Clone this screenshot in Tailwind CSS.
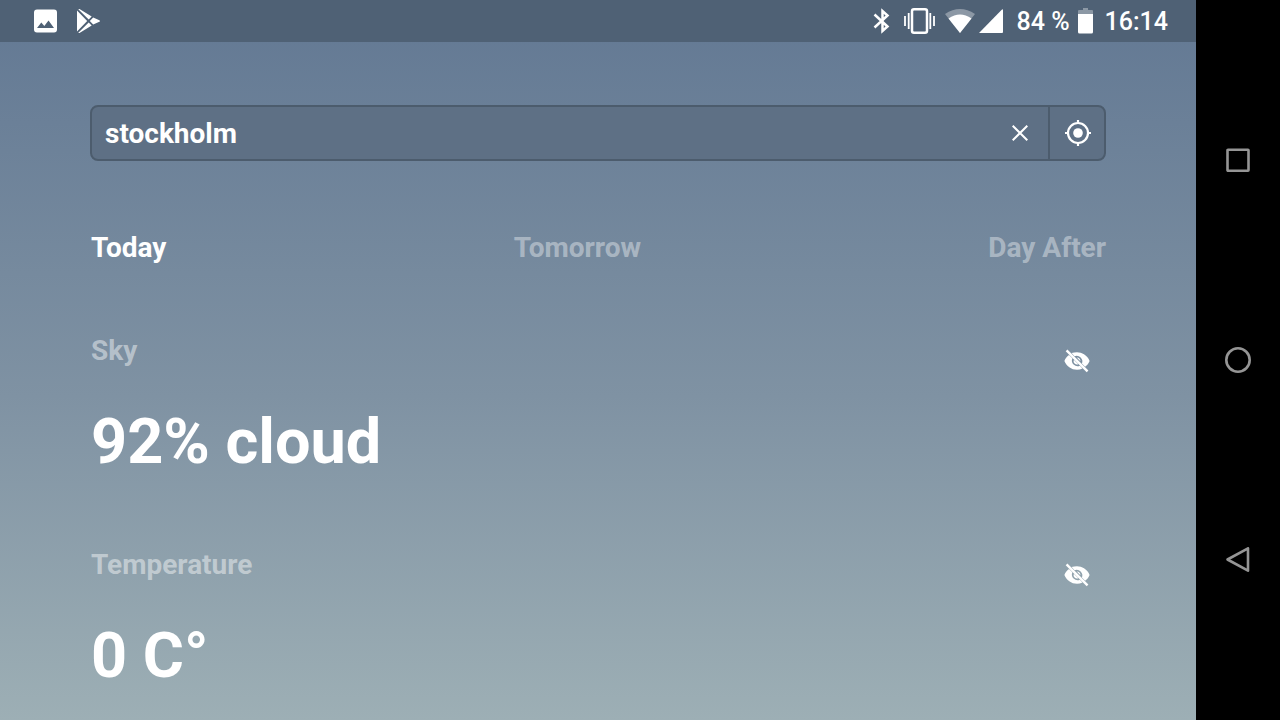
<!DOCTYPE html>
<html lang="en">
<head>
<meta charset="utf-8">
<meta name="viewport" content="width=device-width, initial-scale=1">
<title>Weather</title>
<script src="https://cdn.jsdelivr.net/npm/@tailwindcss/browser@4"></script>
</head>
<body class="flex h-screen overflow-hidden bg-black font-['Roboto',sans-serif] text-white">
<div class="flex min-w-0 flex-1 flex-col bg-linear-to-b/srgb from-[#627893] via-[#7f92a3] via-55% to-[#9dafb5]">
  <header class="flex h-[42px] shrink-0 items-center justify-between bg-[#4f6175] pr-7 pl-[34px] text-[25px] leading-8 font-medium">
    <div class="flex items-center gap-5">
      <svg class="h-6 w-[23px]" viewBox="0 0 23 24" fill="currentColor" aria-label="Picture"><path fill-rule="evenodd" d="M3 .5h17a3 3 0 0 1 3 3v17a3 3 0 0 1-3 3H3a3 3 0 0 1-3-3v-17a3 3 0 0 1 3-3ZM3 19h17l-5.500-7.500-4.200 5.500-3-3.500Z"/></svg>
      <svg class="h-6 w-6" viewBox="0 0 24 24" fill="currentColor" aria-label="Play Store"><path d="M0 1.500v21L10.200 12ZM1.300.3 11.700 10.500l3-2.900L2.500.1Q1.800-.2 1.300.3ZM1.300 23.700 11.700 13.500l3 2.900L2.500 23.900q-.7.300-1.200-.2ZM16.200 8.500 12.800 12l3.400 3.500 6.200-2.700q1.200-.8 0-1.600Z"/></svg>
    </div>
    <div class="flex items-center">
      <svg class="h-[26px] w-[17px]" viewBox="0 0 17 26" fill="none" stroke="currentColor" stroke-width="2.500" aria-label="Bluetooth"><path d="m1.500 6.500 13 12-5 4.500V3l5 4.500-13 12"/></svg>
      <svg class="ml-3.5 h-[26px] w-[31px]" viewBox="0 0 31 26" fill="none" stroke="currentColor" stroke-width="2.500" aria-label="Vibrate"><rect x="8" y="1.300" width="15" height="23.400" rx="2"/><path stroke-width="1.800" d="M1 8v10M4.700 5v16M26.300 5v16M30 8v10"/></svg>
      <svg class="ml-2.5 h-6 w-[30px]" viewBox="0 0 30 24" fill="currentColor" aria-label="Wi-Fi"><path fill-opacity=".35" d="M0 5Q15-5 30 5L15 24Z"/><path d="M3.500 9.500Q15 1.500 26.500 9.500L15 24Z"/></svg>
      <svg class="ml-1 h-6 w-6" viewBox="0 0 24 24" fill="currentColor" aria-label="Signal"><path d="M0 24 22.500 1Q24-.5 24 1.500V23q0 1-1 1Z"/></svg>
      <span class="ml-3.5 pt-0.5">84 %</span>
      <svg class="ml-2 h-[26px] w-[15px]" viewBox="0 0 15 26" fill="currentColor" aria-label="Battery"><path fill-opacity=".35" d="M5 0h5v2h4q1 0 1 1v3H0V3q0-1 1-1h4Z"/><path d="M0 6h15v18q0 1.500-1.500 1.500h-12Q0 25.500 0 24Z"/></svg>
      <time class="ml-3 pt-0.5">16:14</time>
    </div>
  </header>
  <main class="flex min-h-0 flex-1 flex-col overflow-hidden px-[90px] pt-[63px] text-[28px] leading-8 font-bold">
    <form class="flex h-14 shrink-0 overflow-hidden rounded-lg border-2 border-[#4c5c6d] bg-[#5e7085]">
      <input class="min-w-0 flex-1 bg-transparent pt-0.5 pl-[13px] outline-none" type="text" aria-label="Location" value="stockholm">
      <button class="flex w-14 items-center justify-center" type="button" aria-label="Clear">
        <svg class="h-4 w-4" viewBox="0 0 16 16" fill="none" stroke="currentColor" stroke-width="2"><path d="m.7.7 14.600 14.600M15.300.7.7 15.300"/></svg>
      </button>
      <button class="flex w-14 items-center justify-center border-l-2 border-[#4c5c6d] pl-0.5" type="button" aria-label="Use my location">
        <svg class="h-[26px] w-[26px]" viewBox="0 0 26 26" fill="none" stroke="currentColor" stroke-width="2.200"><circle cx="13" cy="13" r="10"/><circle cx="13" cy="13" r="4.800" fill="currentColor" stroke="none"/><path d="M13 0v4M13 22v4M0 13h4M22 13h4"/></svg>
      </button>
    </form>
    <nav class="mt-[71px] flex shrink-0 justify-between pl-px">
      <button type="button">Today</button>
      <button type="button" class="text-white/40">Tomorrow</button>
      <button type="button" class="text-white/40">Day After</button>
    </nav>
    <section class="mt-[71px] flex shrink-0 items-start justify-between pr-px pl-px">
      <div>
        <h2 class="text-white/45">Sky</h2>
        <p class="mt-[35px] text-[63px] leading-[80px]">92% cloud</p>
      </div>
      <button class="flex h-[52px] w-14 items-center justify-center" type="button" aria-label="Hide sky">
        <svg class="h-[26px] w-[26px]" viewBox="0 0 26 26" aria-hidden="true"><use href="#eye-off"/></svg>
      </button>
    </section>
    <section class="mt-[67px] flex shrink-0 items-start justify-between pr-px pl-px">
      <div>
        <h2 class="text-white/45">Temperature</h2>
        <p class="mt-[35px] text-[63px] leading-[80px]">0 C°</p>
      </div>
      <button class="flex h-[52px] w-14 items-center justify-center" type="button" aria-label="Hide temperature">
        <svg class="h-[26px] w-[26px]" viewBox="0 0 26 26"><g id="eye-off" fill="currentColor"><path d="M13 4.200c2.500 0 5 .7 7 2.100 2.700 1.700 4.700 4 5.600 6.700-.8 2.200-2.400 4.300-4.500 5.800l-3.200-3.200a5.700 5.700 0 0 0-7.400-7.400L7.600 5.100Q10.200 4.200 13 4.200ZM5 6.900l3.400 3.400a5.700 5.700 0 0 0 7.500 7.500l2.600 2.700q-2.600 1.300-5.500 1.300c-5.600 0-10.700-3.800-12.600-8.800.8-2.400 2.400-4.500 4.600-6.100Z"/><path d="M12.800 9.600a3.400 3.400 0 0 1 3.600 3.600ZM9.900 11.700l4.500 4.500a3.400 3.400 0 0 1-4.500-4.500Z"/><path d="m1.700 3.200 1.700-1.700 21 21-1.700 1.700Z"/></g></svg>
      </button>
    </section>
  </main>
</div>
<nav class="flex w-[84px] shrink-0 flex-col items-center justify-between bg-black pt-[147px] pb-[147px] text-[#959595]" aria-label="System navigation">
  <button type="button" aria-label="Recent apps"><svg class="h-[26px] w-[26px]" viewBox="0 0 26 26" fill="none" stroke="currentColor" stroke-width="2.600"><rect x="2.500" y="2.800" width="21" height="21" rx=".5"/></svg></button>
  <button type="button" aria-label="Home"><svg class="h-[26px] w-[26px]" viewBox="0 0 26 26" fill="none" stroke="currentColor" stroke-width="2.600"><circle cx="13" cy="13" r="11.700"/></svg></button>
  <button type="button" aria-label="Back"><svg class="h-[26px] w-[26px]" viewBox="0 0 26 26" fill="none" stroke="currentColor" stroke-width="2.600" stroke-linejoin="round"><path d="M23 1.300v22.400L2.500 12.500Z"/></svg></button>
</nav>
</body>
</html>
